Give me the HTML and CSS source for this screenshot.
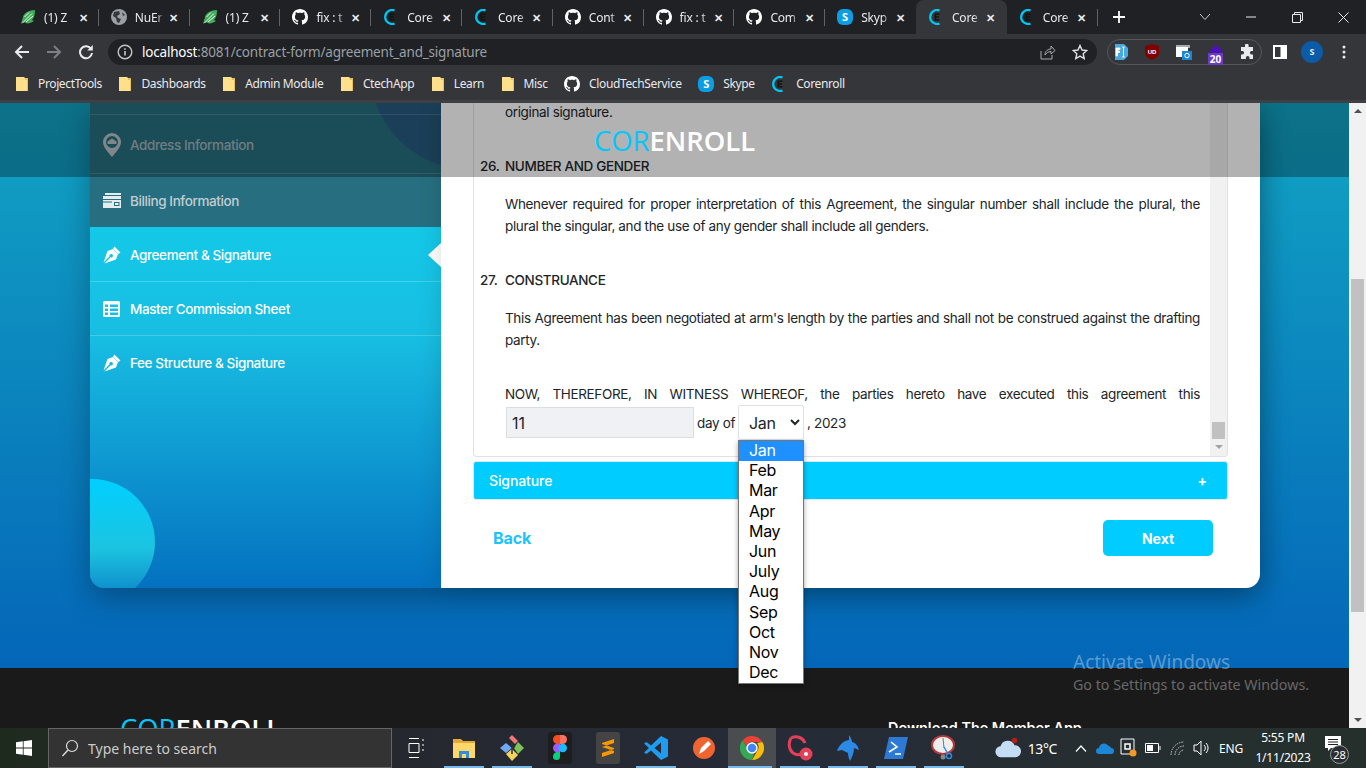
FILE: index.html
```html
<!DOCTYPE html>
<html lang="en">
<head>
    <meta charset="UTF-8">
    <meta name="viewport" content="width=device-width, initial-scale=1.0">
    <title>Corenroll - Agreement and Signature</title>
    <link rel="stylesheet" href="styles.css">
</head>
<body>
    <!-- shared icons -->
    <svg class="icon-defs" aria-hidden="true">
        <symbol id="i-github" viewBox="0 0 16 16"><path fill="#fff" d="M8 0C3.58 0 0 3.58 0 8c0 3.54 2.29 6.53 5.47 7.59.4.07.55-.17.55-.38 0-.19-.01-.82-.01-1.49-2.01.37-2.53-.49-2.69-.94-.09-.23-.48-.94-.82-1.13-.28-.15-.68-.52-.01-.53.63-.01 1.08.58 1.23.82.72 1.21 1.87.87 2.33.66.07-.52.28-.87.51-1.07-1.78-.2-3.64-.89-3.64-3.95 0-.87.31-1.59.82-2.15-.08-.2-.36-1.02.08-2.12 0 0 .67-.21 2.2.82.64-.18 1.32-.27 2-.27.68 0 1.36.09 2 .27 1.53-1.04 2.2-.82 2.2-.82.44 1.1.16 1.92.08 2.12.51.56.82 1.27.82 2.15 0 3.07-1.87 3.75-3.65 3.95.29.25.54.73.54 1.48 0 1.07-.01 1.93-.01 2.2 0 .21.15.46.55.38A8.013 8.013 0 0016 8c0-4.42-3.58-8-8-8z"/></symbol>
        <symbol id="i-core" viewBox="0 0 16 16"><path d="M11.5 1.400A7 7 0 1 0 11.500 14.600" fill="none" stroke="#00c8f5" stroke-width="2.200"/><path fill="#141414" d="M6.500 4.500h5v1.400H8v1.400h3v1.400H8v1.400h3.500v1.400h-5z"/></symbol>
        <symbol id="i-leaf" viewBox="0 0 16 16"><path fill="#3fae5a" d="M1 15 L3 8 C4 4 9 1 15 1 C15 6 14 9 12 11 L14 12 C10 15 6 15 4 13z"/><path stroke="#e9f5e9" stroke-width="1" fill="none" d="M2.500 14 L12 4.500 M6 13 L13 7 M4.500 8 L9 3.500"/></symbol>
        <symbol id="i-globe" viewBox="0 0 16 16"><circle cx="8" cy="8" r="8" fill="#9aa0a6"/><path fill="#35363a" d="M3 3 L8 2 L9 5 L6 7 L7 9 L10 10 L8 14 L6 13 L5 9 L2 7z M11 3 L14 6 L12 7z"/></symbol>
        <symbol id="i-skype" viewBox="0 0 16 16"><rect width="16" height="16" rx="6" fill="#0d9de3"/><text x="8" y="12.400" text-anchor="middle" class="skype-s">S</text></symbol>
        <symbol id="i-folder" viewBox="0 0 14 16"><path fill="#ffe08a" d="M1 1h8l1 1h3v13H1z"/><path fill="#e8c15a" d="M10 2h3v13h-1V4h-2z"/></symbol>
        <symbol id="i-pen" viewBox="0 0 18 18"><path fill="#fff" d="M11.500.5 L17.500 6.500 L15.500 8 L10 2.500z M10 3 L15 8 L13 13.500 L1.500 17.500 L7.600 11.300 A1.700 1.700 0 1 0 6.600 10.300 L.5 16.500 L4.500 5z"/></symbol>
    </svg>

    <!-- browser -->
    <header class="browser">
        <div class="tabstrip">
            <div class="tab"><svg class="favicon"><use href="#i-leaf"/></svg><span class="tab-title">(1) Z</span><span class="tab-close">✕</span></div>
            <div class="tab"><svg class="favicon"><use href="#i-globe"/></svg><span class="tab-title">NuEr</span><span class="tab-close">✕</span></div>
            <div class="tab"><svg class="favicon"><use href="#i-leaf"/></svg><span class="tab-title">(1) Z</span><span class="tab-close">✕</span></div>
            <div class="tab"><svg class="favicon"><use href="#i-github"/></svg><span class="tab-title">fix : t</span><span class="tab-close">✕</span></div>
            <div class="tab"><svg class="favicon"><use href="#i-core"/></svg><span class="tab-title">Core</span><span class="tab-close">✕</span></div>
            <div class="tab"><svg class="favicon"><use href="#i-core"/></svg><span class="tab-title">Core</span><span class="tab-close">✕</span></div>
            <div class="tab"><svg class="favicon"><use href="#i-github"/></svg><span class="tab-title">Cont</span><span class="tab-close">✕</span></div>
            <div class="tab"><svg class="favicon"><use href="#i-github"/></svg><span class="tab-title">fix : t</span><span class="tab-close">✕</span></div>
            <div class="tab"><svg class="favicon"><use href="#i-github"/></svg><span class="tab-title">Com</span><span class="tab-close">✕</span></div>
            <div class="tab tab-before-active"><svg class="favicon"><use href="#i-skype"/></svg><span class="tab-title">Skyp</span><span class="tab-close">✕</span></div>
            <div class="tab tab-active"><svg class="favicon"><use href="#i-core"/></svg><span class="tab-title">Core</span><span class="tab-close">✕</span></div>
            <div class="tab"><svg class="favicon"><use href="#i-core"/></svg><span class="tab-title">Core</span><span class="tab-close">✕</span></div>
            <svg class="new-tab" width="14" height="14" viewBox="0 0 14 14"><path d="M7 1v12M1 7h12" stroke="#fff" stroke-width="1.800"/></svg>
            <div class="window-controls">
                <span class="win-btn"><svg width="12" height="8" viewBox="0 0 12 8"><path d="M1 1l5 5.500L11 1" fill="none" stroke="#c4c7c5"/></svg></span>
                <span class="win-btn"><svg width="10" height="2" viewBox="0 0 10 2"><path d="M0 1h10" stroke="#e8eaed"/></svg></span>
                <span class="win-btn"><svg width="11" height="11" viewBox="0 0 11 11"><path d="M.5 2.500h8v8h-8zM2.500 2.500v-2h8v8h-2" fill="none" stroke="#e8eaed"/></svg></span>
                <span class="win-btn"><svg width="11" height="11" viewBox="0 0 11 11"><path d="M.5.5l10 10M10.500.5l-10 10" stroke="#e8eaed"/></svg></span>
            </div>
        </div>

        <div class="toolbar">
            <svg class="tool-icon" width="16" height="16" viewBox="0 0 16 16"><path d="M15 8H2M8 2L2 8l6 6" fill="none" stroke="#e8eaed" stroke-width="2"/></svg>
            <svg class="tool-icon" width="16" height="16" viewBox="0 0 16 16"><path d="M1 8h13M8 2l6 6-6 6" fill="none" stroke="#7c7f83" stroke-width="2"/></svg>
            <svg class="tool-icon" width="16" height="16" viewBox="0 0 16 16"><path d="M13.200 5.200A6 6 0 1 0 14 9" fill="none" stroke="#e8eaed" stroke-width="2"/><path fill="#e8eaed" d="M14.800 1v5.600H9.200z"/></svg>
            <div class="omnibox">
                <svg width="16" height="16" viewBox="0 0 16 16"><circle cx="8" cy="8" r="6.800" fill="none" stroke="#c4c7c5" stroke-width="1.400"/><path d="M7.200 7h1.600v4.600H7.200zM7.200 4.200h1.600v1.600H7.200z" fill="#c4c7c5"/></svg>
                <span class="url"><span class="url-host">localhost</span>:8081/contract-form/agreement_and_signature</span>
                <svg class="omni-share" width="16" height="16" viewBox="0 0 16 16"><path d="M1 7v8h11v-4M5 11c0-4 3-6 6-6V2l4 4.500L11 10V7.500C8 7.500 6.500 9 5 11z" fill="none" stroke="#a8abaf"/></svg>
                <svg class="omni-star" width="16" height="16" viewBox="0 0 16 16"><path d="M8 1.500l2 4.500 4.800.5-3.600 3.200 1 4.800L8 12.100 3.800 14.500l1-4.800L1.200 6.500 6 6z" fill="none" stroke="#e0e2e5" stroke-width="1.400"/></svg>
            </div>
            <div class="ext-pill">
                <svg width="16" height="18" viewBox="0 0 16 18"><path d="M2 1h9l4 4v8l-4 4H2z" fill="#4aa8e0"/><path d="M3 5h4v1.500H4.500V8H6.500v1.500H4.500V13H3zM9 4h3M9 14h3M10.500 4v10" fill="#fff" stroke="#fff" stroke-width=".8"/></svg>
                <svg width="14" height="16" viewBox="0 0 14 16"><path d="M7 0l7 2v7c0 3-3 5-7 7-4-2-7-4-7-7V2z" fill="#800000"/><text x="7" y="9.500" text-anchor="middle" class="ublock-txt">UD</text></svg>
                <svg width="16" height="16" viewBox="0 0 16 16"><path d="M0 1h14v3H0z" fill="#aaa"/><path d="M0 3h12v10H0z" fill="#fff"/><path d="M6 7h10v9H6z" fill="#1b87d6"/><circle cx="11" cy="11.500" r="2.200" fill="none" stroke="#fff"/></svg>
                <span class="ext-badge-wrap">
                    <svg width="16" height="16" viewBox="0 0 16 16"><path d="M8 1l7 6-7 4-7-4z" fill="#4a12b8"/><path d="M1 9l7 4 7-4v2l-7 4-7-4z" fill="#2a0f80"/></svg>
                    <span class="ext-badge">20</span>
                </span>
                <svg width="15" height="15" viewBox="0 0 15 15"><path fill="#e8eaed" d="M5 1.500a1.800 1.800 0 0 1 3.600 0V3H13v4h-1.300a1.800 1.800 0 0 0 0 3.600H13V15H9.500v-1.300a1.800 1.800 0 0 0-3.600 0V15H1v-4.500h1.300a1.800 1.800 0 0 0 0-3.600H1V3h4z"/></svg>
            </div>
            <svg class="side-panel" width="14" height="14" viewBox="0 0 14 14"><path fill="#fff" d="M0 0h14v14H0z"/><path fill="#35363a" d="M2 2h5.500v10H2z"/></svg>
            <span class="avatar">S</span>
            <svg class="kebab" width="4" height="14" viewBox="0 0 4 14"><circle cx="2" cy="2" r="1.500" fill="#e8eaed"/><circle cx="2" cy="7" r="1.500" fill="#e8eaed"/><circle cx="2" cy="12" r="1.500" fill="#e8eaed"/></svg>
        </div>

        <div class="bookmarks">
            <span class="bookmark"><svg class="bm-folder"><use href="#i-folder"/></svg>ProjectTools</span>
            <span class="bookmark"><svg class="bm-folder"><use href="#i-folder"/></svg>Dashboards</span>
            <span class="bookmark"><svg class="bm-folder"><use href="#i-folder"/></svg>Admin Module</span>
            <span class="bookmark"><svg class="bm-folder"><use href="#i-folder"/></svg>CtechApp</span>
            <span class="bookmark"><svg class="bm-folder"><use href="#i-folder"/></svg>Learn</span>
            <span class="bookmark"><svg class="bm-folder"><use href="#i-folder"/></svg>Misc</span>
            <span class="bookmark"><svg class="favicon"><use href="#i-github"/></svg>CloudTechService</span>
            <span class="bookmark"><svg class="favicon"><use href="#i-skype"/></svg>Skype</span>
            <span class="bookmark"><svg class="favicon"><use href="#i-core"/></svg>Corenroll</span>
        </div>
    </header>

    <!-- page -->
    <div class="viewport">
        <div class="page">
            <main class="hero">
                <div class="card">
                    <aside class="sidebar">
                        <div class="steps-done">
                            <div class="step step-address">
                                <svg class="step-icon" width="18" height="24" viewBox="0 0 18 24"><path fill="#b6c2c6" fill-rule="evenodd" d="M9 0a9 9 0 0 1 9 9c0 5-5 10-9 15C5 19 0 14 0 9a9 9 0 0 1 9-9zm0 3a6 6 0 1 0 0 12A6 6 0 0 0 9 3z"/><path fill="#b6c2c6" d="M9 5.500l4.500 3V11h-9V8.500z"/></svg>
                                <span>Address Information</span>
                            </div>
                            <div class="step step-billing">
                                <svg class="step-icon" width="18" height="15" viewBox="0 0 18 15"><path fill="#e3ecef" d="M2 0h16v2H2zM0 3h18v12H0z"/><path fill="#276f80" d="M0 6h18v1H0zM0 8.500h9v1H0zM11 9h5.500v4H11z"/><path fill="#e3ecef" d="M12 10h3.500v2H12z"/></svg>
                                <span>Billing Information</span>
                            </div>
                        </div>
                        <div class="steps-todo">
                            <div class="step step-active">
                                <svg class="step-icon" width="18" height="18"><use href="#i-pen"/></svg>
                                <span>Agreement &amp; Signature</span>
                            </div>
                            <div class="step">
                                <svg class="step-icon" width="18" height="16" viewBox="0 0 18 16"><path fill="#fff" fill-rule="evenodd" d="M1.500 0h14A1.500 1.500 0 0 1 17 1.500v13a1.500 1.500 0 0 1-1.500 1.500h-14A1.500 1.500 0 0 1 0 14.500v-13A1.500 1.500 0 0 1 1.500 0zM2 3.500v2.500h3V3.500zm5 0v2.500h8V3.500zM2 7.500V10h3V7.500zm5 0V10h8V7.500zM2 11.500V14h3v-2.500zm5 0V14h8v-2.500z"/></svg>
                                <span>Master Commission Sheet</span>
                            </div>
                            <div class="step step-last">
                                <svg class="step-icon" width="18" height="18"><use href="#i-pen"/></svg>
                                <span>Fee Structure &amp; Signature</span>
                            </div>
                            <div class="blob"></div>
                        </div>
                    </aside>

                    <section class="panel">
                        <div class="agreement">
                            <div class="agreement-text">
                                <p class="clause">original signature.</p>
                                <h4 class="clause-title"><span class="clause-no">26.</span>NUMBER AND GENDER</h4>
                                <p class="clause">Whenever required for proper interpretation of this Agreement, the singular number shall include the plural, the plural the singular, and the use of any gender shall include all genders.</p>
                                <h4 class="clause-title"><span class="clause-no">27.</span>CONSTRUANCE</h4>
                                <p class="clause">This Agreement has been negotiated at arm's length by the parties and shall not be construed against the drafting party.</p>
                                <p class="witness">NOW, THEREFORE, IN WITNESS WHEREOF, the parties hereto have executed this agreement this</p>
                                <div class="witness-row">
                                    <input class="day-input" type="text" value="11">
                                    <span>day of</span>
                                    <select class="month-select">
                                        <option>Jan</option><option>Feb</option><option>Mar</option><option>Apr</option><option>May</option><option>Jun</option><option>July</option><option>Aug</option><option>Sep</option><option>Oct</option><option>Nov</option><option>Dec</option>
                                    </select>
                                    <span>, 2023</span>
                                </div>
                            </div>
                            <div class="inner-scroll">
                                <span class="inner-thumb"></span>
                                <span class="inner-down"></span>
                            </div>
                        </div>
                        <div class="accordion-bar"><span>Signature</span><span class="accordion-plus">+</span></div>
                        <div class="form-nav">
                            <a class="btn-back">Back</a>
                            <a class="btn-next">Next</a>
                        </div>
                    </section>
                </div>
            </main>
            <footer class="site-footer">
                <div class="logo"><span class="logo-cor">COR</span>ENROLL</div>
                <div class="footer-app">Download The Member App</div>
            </footer>
        </div>

        <!-- sticky header over the page -->
        <div class="sticky-head"><div class="logo"><span class="logo-cor">COR</span>ENROLL</div></div>

        <!-- open select list -->
        <ul class="month-list">
            <li class="month-on">Jan</li><li>Feb</li><li>Mar</li><li>Apr</li><li>May</li><li>Jun</li><li>July</li><li>Aug</li><li>Sep</li><li>Oct</li><li>Nov</li><li>Dec</li>
        </ul>

        <div class="activate">
            <div class="activate-title">Activate Windows</div>
            <div class="activate-sub">Go to Settings to activate Windows.</div>
        </div>

        <div class="page-scroll">
            <span class="arrow-up"></span>
            <span class="page-thumb"></span>
            <span class="arrow-down"></span>
        </div>
    </div>

    <!-- windows taskbar -->
    <footer class="taskbar">
        <span class="start">
            <svg width="16" height="16" viewBox="0 0 16 16"><path fill="#fff" d="M0 2.300l6.800-1v6.300H0zM7.600 1.200L16 0v7.600H7.600zM0 8.400h6.800v6.300l-6.800-1zM7.600 8.400H16V16l-8.400-1.200z"/></svg>
        </span>
        <div class="search">
            <svg width="18" height="18" viewBox="0 0 18 18"><circle cx="11" cy="7" r="5.500" fill="none" stroke="#ddd" stroke-width="1.200"/><path d="M7 11L1.500 17" stroke="#ddd" stroke-width="1.400"/></svg>
            <span>Type here to search</span>
        </div>
        <span class="task task-view"><svg width="16" height="20" viewBox="0 0 16 20"><path d="M1 .5h10M1 19.500h10M1 5.500h10v9H1zM15 1v2M15 6v2M15 11v2" fill="none" stroke="#fff"/></svg></span>
        <span class="task task-open"><svg width="22" height="20" viewBox="0 0 22 20"><path fill="#e2a93a" d="M0 1h8l2 2h12v3H0z"/><path fill="#ffd76a" d="M0 5h22v15H0z"/><path fill="#2f8fdc" d="M6 13h10v7h-3v-4H9v4H6z"/></svg></span>
        <span class="task task-open"><svg width="24" height="26" viewBox="0 0 24 26"><path fill="#6fa8f5" d="M6 8l6 5-6 5-6-5z"/><path fill="#f2777a" d="M12 0l6 6-3 3-6-6z"/><path fill="#7dc458" d="M18 7l6 6-6 6-4-6z"/><path fill="#f4d35e" d="M6 19l6-5 6 6-6 6z"/><path d="M12 8v11M15 11l-3 3" stroke="#333" stroke-width="1.500" fill="none"/></svg></span>
        <span class="task"><span class="app-tile app-figma"><svg width="14" height="26" viewBox="0 0 14 26"><path fill="#f24e1e" d="M0 4.500A4.500 4.500 0 0 1 4.500 0H7v9H4.500A4.500 4.500 0 0 1 0 4.500z"/><path fill="#ff7262" d="M7 0h2.500a4.500 4.500 0 0 1 0 9H7z"/><path fill="#a259ff" d="M0 13a4.500 4.500 0 0 1 4.500-4.500H7v9H4.500A4.500 4.500 0 0 1 0 13z"/><circle cx="9.700" cy="13" r="4.300" fill="#1abcfe"/><path fill="#0acf83" d="M0 21.500A4.500 4.500 0 0 1 4.500 17H7v4.500a3.500 3.500 0 0 1-7 0z"/></svg></span></span>
        <span class="task"><span class="app-tile app-sublime"><svg width="14" height="18" viewBox="0 0 14 18"><path fill="#ff9800" d="M13 0v4L1 8V4zM1 8l12 4v-3L1 5zM13 10v4L1 18v-4z"/></svg></span></span>
        <span class="task task-open"><svg width="24" height="24" viewBox="0 0 24 24"><path fill="#1f9cf0" d="M17 0l7 3.500v17L17 24 7 14.500 2.500 18 0 16.500 5 12 0 7.500 2.500 6 7 9.500zM17 6.500L10.500 12l6.500 5.500z"/></svg></span>
        <span class="task"><svg width="24" height="24" viewBox="0 0 24 24"><circle cx="12" cy="12" r="11" fill="#f0652f"/><path d="M7 18l2-6 7-7 3 3-7 7z" fill="#fff"/></svg></span>
        <span class="task task-open task-chrome">
            <svg width="24" height="24" viewBox="0 0 24 24"><path fill="#ea4335" d="M12 0a12 12 0 0 1 10.400 6H12a6 6 0 0 0-5.600 3.800L2.700 4.300A12 12 0 0 1 12 0z"/><path fill="#fbbc04" d="M22.400 6A12 12 0 0 1 12 24l5.200-9A6 6 0 0 0 17 7z"/><path fill="#34a853" d="M2.700 4.300l5 9A6 6 0 0 0 14 17.700L12 24A12 12 0 0 1 2.700 4.300z"/><circle cx="12" cy="12" r="5" fill="#4285f4" stroke="#fff" stroke-width="1.400"/></svg>
        </span>
        <span class="task task-open"><svg width="26" height="26" viewBox="0 0 26 26"><path d="M4 3c6-3 12 0 14 5M4 3c-3 5-2 12 2 15 3 2 6 2 8 1" fill="none" stroke="#e5405a" stroke-width="3"/><circle cx="19" cy="19" r="6.500" fill="#e5405a"/><circle cx="19" cy="19" r="2" fill="#fff"/></svg></span>
        <span class="task task-open"><svg width="24" height="26" viewBox="0 0 24 26"><path fill="#2b8ae6" d="M13 0c2 3 3 5 3 7 4 1 6 4 7 8l-5-2c0 5-2 9-4 13-1-2-2-5-2-8L6 15 1 16c2-6 6-10 12-11z"/></svg></span>
        <span class="task task-open"><svg width="24" height="24" viewBox="0 0 24 24"><path fill="#2d7ad6" d="M5 1h19l-5 22H0z"/><path d="M7 6l6 5-8 5M11 18h6" fill="none" stroke="#fff" stroke-width="1.600"/></svg></span>
        <span class="task task-open"><svg width="26" height="26" viewBox="0 0 26 26"><ellipse cx="12" cy="10" rx="11" ry="9" fill="#eee" stroke="#b5383a" stroke-width="2"/><path d="M12 3l1 10" stroke="#777"/><circle cx="18" cy="21" r="2.500" fill="none" stroke="#2b8ae6" stroke-width="1.500"/><circle cx="12" cy="22" r="2.500" fill="#888"/><path d="M13 12l4 7" stroke="#2b8ae6" stroke-width="1.500"/></svg></span>

        <div class="tray">
            <span class="tray-weather">
                <svg width="26" height="22" viewBox="0 0 28 22"><path fill="#c4ddf5" d="M7 21a6 6 0 0 1-1-12 8 8 0 0 1 15-1 6.500 6.500 0 0 1 1 13z"/><circle cx="21" cy="3" r="3" fill="#b3201c"/></svg>
                <span>13°C</span>
            </span>
            <span class="tray-slot"><svg width="12" height="7" viewBox="0 0 12 7"><path d="M1 6.500l5-5.500 5 5.500" fill="none" stroke="#fff" stroke-width="1.200"/></svg></span>
            <span class="tray-slot"><svg width="18" height="12" viewBox="0 0 18 12"><path fill="#1b87d6" d="M3 12a3 3 0 0 1 0-6 5 5 0 0 1 9-2.500A4 4 0 0 1 15 6a3 3 0 0 1 0 6z"/></svg></span>
            <span class="tray-slot"><svg width="18" height="20" viewBox="0 0 18 20"><path d="M1 1h13v15H1z" fill="none" stroke="#fff"/><path d="M5 6h5v5H5z" fill="none" stroke="#fff" stroke-width="1.500"/><circle cx="13" cy="15" r="3.500" fill="#f59a23"/></svg></span>
            <span class="tray-slot"><svg width="16" height="10" viewBox="0 0 16 10"><path d="M.5.5h13v9H.5zM15 3v4" fill="none" stroke="#fff"/><path d="M2 2h6v6H2z" fill="#fff"/></svg></span>
            <span class="tray-slot"><svg width="15" height="15" viewBox="0 0 15 15"><path d="M1 14A13 13 0 0 1 14 1M5 14a9 9 0 0 1 9-9M9 14a5 5 0 0 1 5-5" fill="none" stroke="#ccc" stroke-dasharray="1.500 1"/></svg></span>
            <span class="tray-slot"><svg width="16" height="16" viewBox="0 0 16 16"><path d="M1 5h3l4-4v14l-4-4H1zM11 5a4 4 0 0 1 0 6M13 3a7 7 0 0 1 0 10" fill="none" stroke="#fff"/></svg></span>
            <span class="tray-lang">ENG</span>
            <span class="tray-clock"><span>5:55 PM</span><span>1/11/2023</span></span>
            <span class="tray-note">
                <svg width="16" height="15" viewBox="0 0 16 15"><path fill="#fff" d="M0 0h16v12H6l-3 3v-3H0z"/><path d="M3 3.500h10M3 6h10M3 8.500h10" stroke="#222"/></svg>
                <span class="tray-count">28</span>
            </span>
        </div>
    </footer>
</body>
</html>
```

FILE: styles.css
```css
* {
    margin: 0;
    padding: 0;
    box-sizing: border-box;
}

html, body {
    width: 1366px;
    height: 768px;
    overflow: hidden;
}

body {
    font-family: "Inter", sans-serif;
    font-size: 14px;
    color: #212529;
    background: #202124;
}

.icon-defs {
    position: absolute;
    width: 0;
    height: 0;
}

.skype-s {
    font: 700 11px "Open Sans", sans-serif;
    fill: #fff;
}

.ublock-txt {
    font: 700 6px "Liberation Sans", sans-serif;
    fill: #fff;
}

/* browser chrome */
.browser {
    height: 103px;
    background: #35363a;
    border-bottom: 3px solid #3f4043;
    font-family: "Noto Sans", sans-serif;
    font-size: 12px;
    color: #e8eaed;
}

.tabstrip {
    height: 34px;
    background: #202124;
    display: flex;
    align-items: center;
    padding-left: 8px;
}

.tab {
    width: 90.8px;
    height: 34px;
    flex: none;
    display: flex;
    align-items: center;
    padding-left: 12px;
    position: relative;
}

.tab::after {
    content: "";
    position: absolute;
    right: 0;
    top: 9px;
    height: 17px;
    width: 1px;
    background: #5f6368;
}

.tab-before-active::after,
.tab-active::after {
    display: none;
}

.tab-active {
    background: #35363a;
    border-radius: 8px 8px 0 0;
}

.favicon {
    width: 16px;
    height: 16px;
    flex: none;
}

.tab-title {
    width: 29px;
    margin-left: 8px;
    overflow: hidden;
    white-space: nowrap;
    letter-spacing: -0.2px;
    -webkit-mask-image: linear-gradient(to right, #000 75%, transparent);
    mask-image: linear-gradient(to right, #000 75%, transparent);
}

.tab-close {
    margin-left: 2px;
    width: 16px;
    text-align: center;
    font-size: 11px;
    font-weight: 700;
    color: #e8eaed;
}

.new-tab {
    margin-left: 14px;
    flex: none;
}

.window-controls {
    margin-left: auto;
    display: flex;
}

.win-btn {
    width: 46px;
    height: 34px;
    display: flex;
    align-items: center;
    justify-content: center;
}

.toolbar {
    height: 35px;
    display: flex;
    align-items: center;
    padding-left: 14px;
}

.tool-icon {
    margin-right: 16px;
    flex: none;
}

.omnibox {
    width: 989px;
    height: 26px;
    margin-left: -2px;
    background: #202124;
    border-radius: 13px;
    display: flex;
    align-items: center;
    padding-left: 9px;
}

.url {
    margin-left: 9px;
    font-size: 13.5px;
    letter-spacing: -0.2px;
    color: #9aa0a6;
}

.url-host {
    color: #fff;
}

.omni-share {
    margin-left: auto;
}

.omni-star {
    margin: 0 9px 0 16px;
}

.ext-pill {
    width: 155px;
    height: 26px;
    margin-left: 10px;
    border: 1px solid #55575b;
    border-radius: 13px;
    display: flex;
    align-items: center;
    justify-content: space-between;
    padding: 0 6px 0 5px;
}

.ext-badge-wrap {
    position: relative;
    display: flex;
}

.ext-badge {
    position: absolute;
    left: 0;
    top: 9px;
    padding: 0 2px;
    background: #6a3cc0;
    color: #fff;
    font-size: 10px;
    font-weight: 700;
    line-height: 12px;
}

.side-panel {
    margin-left: 11px;
    flex: none;
}

.avatar {
    width: 22px;
    height: 22px;
    margin-left: 14px;
    border-radius: 50%;
    background: #0b5ba8;
    color: #e8eaed;
    font-size: 9px;
    font-weight: 700;
    display: flex;
    align-items: center;
    justify-content: center;
    flex: none;
}

.kebab {
    margin-left: 19px;
    flex: none;
}

.bookmarks {
    height: 31px;
    display: flex;
    align-items: center;
    padding: 0 0 2px 15px;
    gap: 16.5px;
    letter-spacing: -0.37px;
}

.bookmark {
    display: flex;
    align-items: center;
    gap: 9px;
    white-space: nowrap;
}

.bm-folder {
    width: 14px;
    height: 16px;
    flex: none;
}

/* page */
.viewport {
    position: relative;
    height: 625px;
    overflow: hidden;
    display: flex;
}

.page {
    width: 1349px;
    flex: none;
    display: flex;
    flex-direction: column;
    background: linear-gradient(#12a4c4, #0466b8 565px);
}

.hero {
    height: 565px;
    flex: none;
    padding-left: 90px;
}

.card {
    width: 1170px;
    height: 485px;
    display: flex;
    border-radius: 0 0 14px 14px;
    box-shadow: 0 10px 30px rgba(0, 0, 0, 0.3);
}

.sidebar {
    width: 351px;
    flex: none;
    display: flex;
    flex-direction: column;
    position: relative;
    overflow: hidden;
    border-radius: 0 0 0 14px;
    color: #fff;
    font-size: 13.5px;
    letter-spacing: -0.4px;
    font-weight: 500;
}

.steps-done {
    padding-top: 11px;
    background: #276f80;
    color: #c2cdd1;
    position: relative;
}

.steps-done::before {
    content: "";
    position: absolute;
    left: 280px;
    top: -132px;
    width: 198px;
    height: 198px;
    border-radius: 50%;
    background: #275b7e;
}

.steps-done .step {
    position: relative;
}

.steps-todo {
    flex: 1;
    position: relative;
    padding-top: 1px;
    background: linear-gradient(#14c8e8, #18bee2 30%, #0471c0);
}

.step {
    height: 54px;
    display: flex;
    align-items: center;
    padding-left: 13px;
    border-bottom: 1px solid rgba(255, 255, 255, 0.2);
    position: relative;
}

.step-last {
    border-bottom: none;
}

.step-address {
    height: 60px;
    padding-top: 1px;
    border-top: 1px solid rgba(255, 255, 255, 0.15);
    border-bottom: 1px solid rgba(255, 255, 255, 0.15);
    color: #a2b2b8;
}

.step-billing {
    height: 53px;
    border-bottom: none;
}

.step-icon {
    width: 18px;
    margin-right: 9px;
    flex: none;
}

.step-active::after {
    content: "";
    position: absolute;
    right: 0;
    top: 15px;
    border: 12px solid transparent;
    border-right: 13px solid #fff;
    border-left: none;
}

.blob {
    position: absolute;
    left: -61px;
    bottom: -17px;
    width: 126px;
    height: 126px;
    border-radius: 50%;
    background: linear-gradient(#00cfff, #1cc4e0 55%, #0a7cc4 100%);
}

.panel {
    width: 819px;
    flex: none;
    background: #fff;
    border-radius: 0 0 14px 0;
    padding: 0 32px;
    position: relative;
    box-shadow: 0 0 24px rgba(0, 0, 0, 0.14);
}

.agreement {
    width: 755px;
    height: 354px;
    display: flex;
    border: 1px solid #dee2e6;
    border-top: none;
    border-radius: 0 0 4px 4px;
    overflow: hidden;
}

.agreement-text {
    flex: 1;
    margin-top: -2px;
    padding: 0 10px 0 31px;
    font-size: 13.5px;
    letter-spacing: -0.35px;
    line-height: 22px;
}

.clause {
    text-align: justify;
    margin-bottom: 32px;
}

.witness {
    text-align: justify;
    text-align-last: justify;
}

.witness-row {
    display: flex;
    align-items: center;
    gap: 3px;
    height: 35px;
    margin-left: 1px;
}

.clause-title {
    font-size: 13.5px;
    font-weight: 500;
    margin: 0 0 16px -25px;
    line-height: 22px;
    display: flex;
}

.clause-no {
    width: 25px;
}

.day-input {
    width: 188px;
    height: 31px;
    padding-left: 5px;
    font: 16px "Inter", sans-serif;
    color: #212529;
    background: #f0f1f5;
    border: 1px solid #dcdde1;
}

.month-select {
    width: 66px;
    height: 35px;
    padding-left: 6px;
    font: 16px "Inter", sans-serif;
    letter-spacing: -0.3px;
    color: #212529;
    background: #fff;
    border: 1px solid #dee2e6;
    border-radius: 2px;
}

.inner-scroll {
    width: 17px;
    flex: none;
    background: #f1f1f1;
    display: flex;
    flex-direction: column;
    justify-content: flex-end;
    align-items: center;
    padding-bottom: 7px;
}

.inner-thumb {
    width: 13px;
    height: 17px;
    background: #c1c1c1;
    margin-bottom: 6px;
}

.inner-down {
    width: 0;
    height: 0;
    border: 4px solid transparent;
    border-top: 4px solid #a3a3a3;
    border-bottom: none;
}

.accordion-bar {
    width: 755px;
    height: 39px;
    margin-top: 4px;
    padding: 0 20px 0 15px;
    background: #00ccff;
    border: 1px solid #e4e6ea;
    border-radius: 3px;
    color: #fff;
    font-weight: 500;
    letter-spacing: -0.1px;
    display: flex;
    align-items: center;
    justify-content: space-between;
}

.accordion-plus {
    font-weight: 700;
}

.form-nav {
    display: flex;
    align-items: center;
    justify-content: space-between;
    margin-top: 20px;
    padding: 0 15px 0 20px;
}

.btn-back {
    font-size: 16px;
    font-weight: 700;
    letter-spacing: -0.1px;
    color: #1cc4ff;
}

.btn-next {
    width: 110px;
    height: 36px;
    background: #00ccff;
    border-radius: 5px;
    color: #fff;
    font-weight: 700;
    display: flex;
    align-items: center;
    justify-content: center;
}

.site-footer {
    flex: 1;
    background: #1a1a1a;
    color: #fff;
    padding: 49px 0 0 120px;
    display: flex;
    align-items: flex-start;
    overflow: hidden;
}

.logo {
    font-family: "Open Sans", sans-serif;
    font-size: 27.4px;
    font-weight: 600;
    line-height: 24px;
    color: #fff;
}

.logo-cor {
    color: #00c8ff;
    font-weight: 500;
}

.footer-app {
    margin-left: 607px;
    font-size: 14.4px;
    font-weight: 600;
    line-height: 18px;
    margin-top: 2px;
}

/* things lying over the page */
.sticky-head {
    position: absolute;
    left: 0;
    top: 0;
    width: 1349px;
    height: 74px;
    background: rgba(0, 0, 0, 0.3);
    padding: 26px 0 0 594px;
}

.month-list {
    position: absolute;
    left: 738px;
    top: 337px;
    width: 66px;
    background: #fff;
    border: 1px solid #767676;
    box-shadow: 0 2px 5px rgba(0, 0, 0, 0.35);
    list-style: none;
    font-size: 16px;
    letter-spacing: -0.3px;
    color: #000;
}

.month-list li {
    padding: 0 0 1.2px 10px;
    line-height: 19px;
}

.month-on {
    background: #1e90ff;
    color: #fff;
}

.activate {
    position: absolute;
    left: 1073px;
    top: 547px;
    font-family: "Noto Sans", sans-serif;
    color: rgba(255, 255, 255, 0.35);
}

.activate-title {
    font-size: 19px;
    line-height: 24px;
}

.activate-sub {
    font-size: 14.25px;
    line-height: 22px;
}

.page-scroll {
    width: 17px;
    flex: none;
    background: #f1f1f1;
    display: flex;
    flex-direction: column;
    align-items: center;
    padding: 6px 0;
}

.arrow-up {
    width: 0;
    height: 0;
    border: 4px solid transparent;
    border-bottom: 4px solid #505050;
    border-top: none;
}

.page-thumb {
    width: 13px;
    height: 333px;
    margin-top: 166px;
    background: #c1c1c1;
}

.arrow-down {
    width: 0;
    height: 0;
    margin-top: auto;
    border: 4px solid transparent;
    border-top: 4px solid #505050;
    border-bottom: none;
}

/* taskbar */
.taskbar {
    height: 40px;
    display: flex;
    align-items: center;
    background: linear-gradient(to right, #1f2a1f, #25282f 30%, #262b38 55%, #25302c);
    font-family: "Noto Sans", sans-serif;
    font-size: 14px;
    color: #fff;
}

.start {
    width: 48px;
    height: 40px;
    display: flex;
    align-items: center;
    justify-content: center;
    flex: none;
}

.search {
    width: 344px;
    height: 40px;
    flex: none;
    display: flex;
    align-items: center;
    gap: 9px;
    padding-left: 12px;
    background: #333;
    border: 1px solid #666;
    color: #ccc;
}

.task {
    width: 48px;
    height: 40px;
    flex: none;
    display: flex;
    align-items: center;
    justify-content: center;
    position: relative;
}

.task-open::after {
    content: "";
    position: absolute;
    left: 4px;
    right: 4px;
    bottom: 0;
    height: 2px;
    background: #76b9ed;
}

.task-chrome {
    background: #4a4d4f;
}

.task-chrome::after {
    left: 0;
    right: 4px;
}

.app-tile {
    width: 24px;
    height: 32px;
    border-radius: 3px;
    display: flex;
    align-items: center;
    justify-content: center;
}

.app-figma {
    background: #1e1e1e;
}

.app-sublime {
    background: #444;
}

.tray {
    margin-left: auto;
    height: 40px;
    display: flex;
    align-items: center;
    flex: none;
}

.tray-weather {
    display: flex;
    align-items: center;
    gap: 7px;
    margin-right: 12px;
    letter-spacing: -0.4px;
}

.tray-slot {
    width: 24px;
    height: 40px;
    display: flex;
    align-items: center;
    justify-content: center;
}

.tray-lang {
    width: 30px;
    margin: 0 8px 0 3px;
    font-size: 12px;
    text-align: center;
    letter-spacing: -0.2px;
}

.tray-clock {
    width: 58px;
    display: flex;
    flex-direction: column;
    align-items: center;
    font-size: 12px;
    line-height: 20px;
    letter-spacing: -0.2px;
    white-space: nowrap;
}

.tray-note {
    width: 54px;
    height: 40px;
    position: relative;
    padding: 8px 0 0 13px;
}

.tray-count {
    position: absolute;
    left: 18px;
    top: 17px;
    width: 19px;
    height: 19px;
    border-radius: 50%;
    background: #2a2d33;
    border: 1px solid #999;
    font-size: 11px;
    line-height: 17px;
    text-align: center;
}
```
